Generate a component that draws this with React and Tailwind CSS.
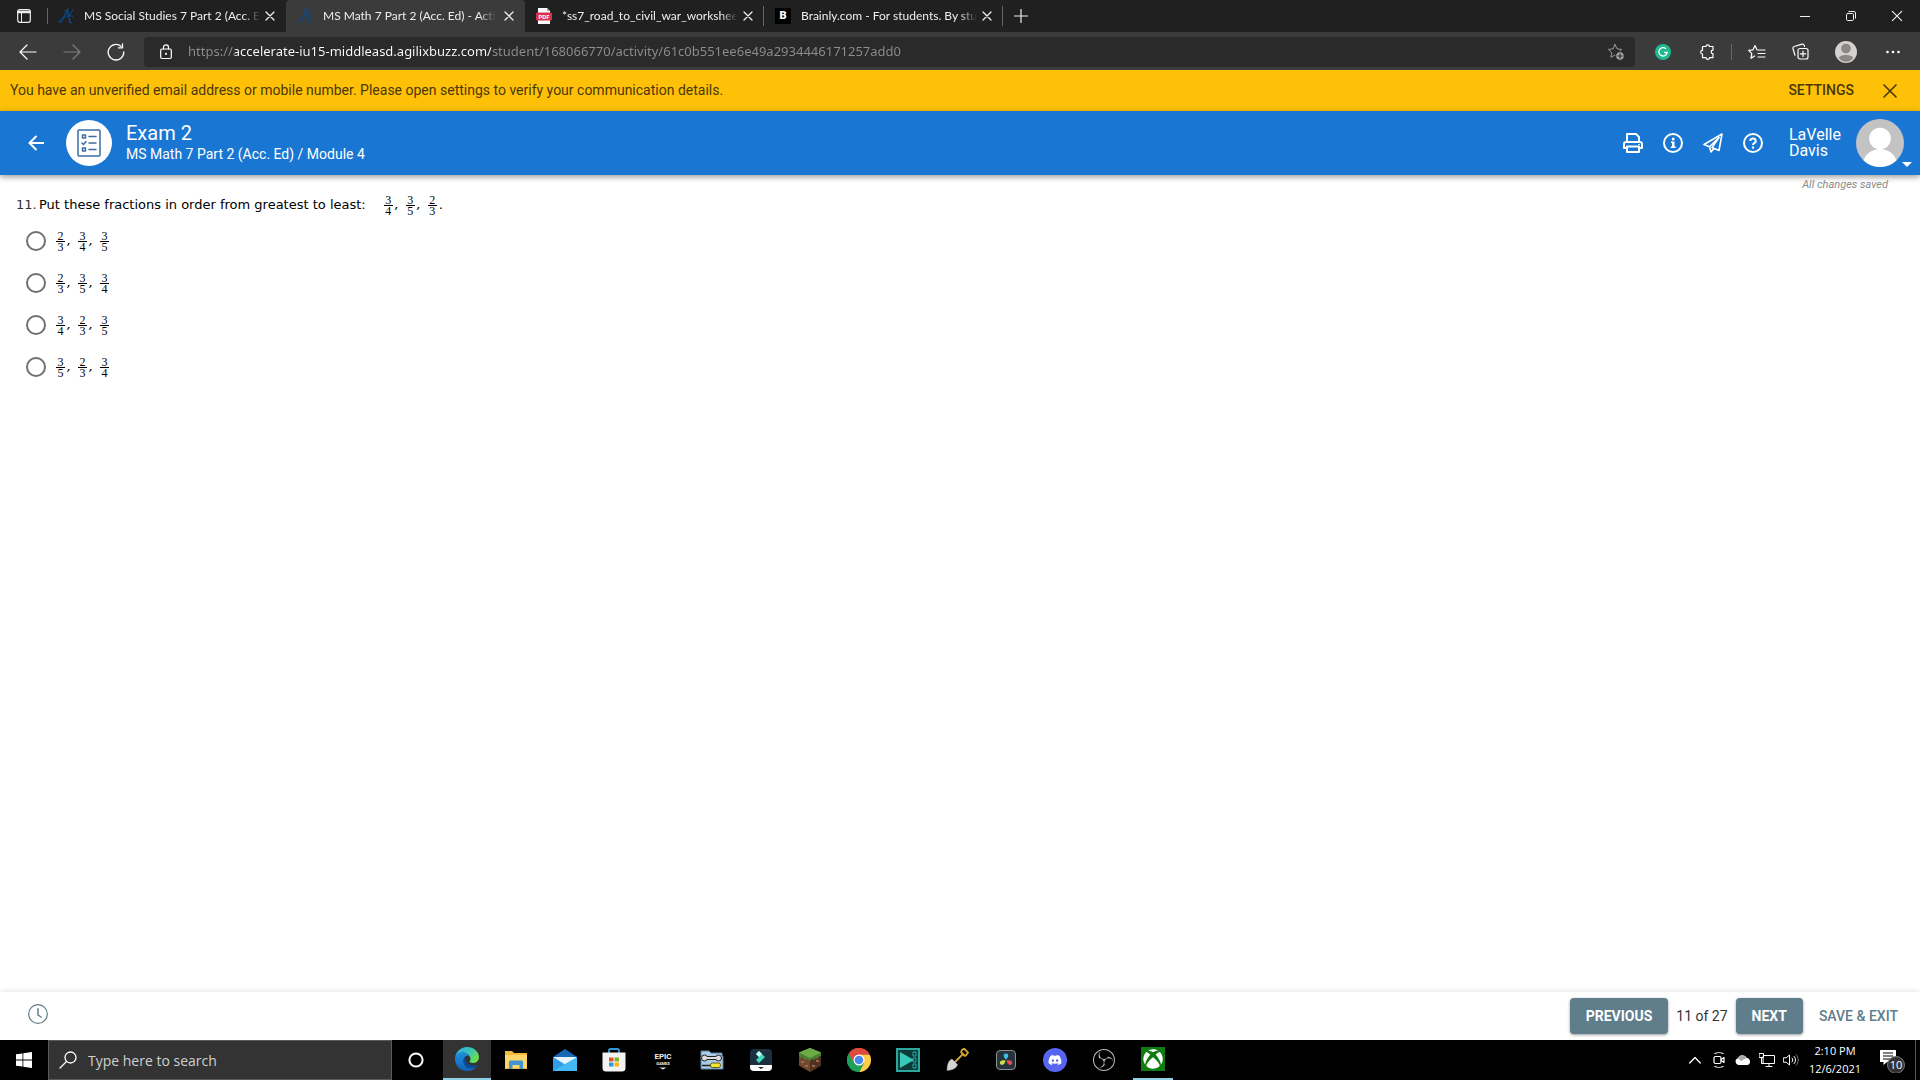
import React from "react";
import { FaDiscord, FaXbox } from "react-icons/fa";
import { SiObsstudio } from "react-icons/si";

const segoe = "font-['Open_Sans','Noto_Sans',sans-serif]";
const line = { fill: "none", stroke: "currentColor", strokeLinecap: "round", strokeLinejoin: "round" };

function CloseIcon({ className = "size-3", w = 1.3 }) {
  return (
    <svg viewBox="0 0 12 12" className={className} {...line} strokeWidth={w}>
      <path d="M2 2l8 8M10 2l-8 8" />
    </svg>
  );
}

function AFavicon({ className }) {
  return (
    <svg viewBox="0 0 16 16" className={className} fill="none" stroke="currentColor" strokeWidth="1.700">
      <path d="M.5 14C4 13 7.500 7 9.500 2L12 14.500h2" />
      <path d="M4 9.500c3.500.8 8-3 11.500-8M10 6l5 3" strokeWidth="1.200" />
      <path d="M2 14h3M6 3h3" strokeWidth="1" />
    </svg>
  );
}

function PdfFavicon() {
  return (
    <svg viewBox="0 0 16 16" className="size-4">
      <path d="M2 0h9l3 3v13H2z" fill="#fff" />
      <path d="M11 0l3 3h-3z" fill="#999" />
      <rect x="0" y="4.500" width="16" height="8" rx="1" fill="#d8324a" />
      <text x="8" y="10.900" textAnchor="middle" fontSize="6" fontWeight="700" fontFamily="Roboto" fill="#fff">PDF</text>
    </svg>
  );
}

function BrainlyFavicon() {
  return (
    <span className="flex size-4 items-center justify-center bg-black font-['Roboto',sans-serif] text-[11px] font-black text-white">B</span>
  );
}

const tabs = [
  { title: "MS Social Studies 7 Part 2 (Acc. E", icon: <AFavicon className="size-4 text-[#10457a]" /> },
  { title: "MS Math 7 Part 2 (Acc. Ed) - Acti", icon: <AFavicon className="size-4 text-[#1a4676]" />, active: true },
  { title: "*ss7_road_to_civil_war_workshee", icon: <PdfFavicon />, divider: true },
  { title: "Brainly.com - For students. By stu", icon: <BrainlyFavicon />, divider: true },
];

function TabBar() {
  return (
    <div className={`${segoe} flex h-8 items-stretch bg-[#202020] text-[#eee]`}>
      <button aria-label="Tab actions menu" className="flex w-12 items-center justify-center">
        <svg viewBox="0 0 14 14" className="size-3.5" {...line}>
          <rect x=".7" y=".7" width="12.600" height="12.600" rx="2" strokeWidth="1.200" />
          <path d="M1 3h12" strokeWidth="2.500" />
          <path d="M4.500 3v10" />
        </svg>
      </button>
      <span className="my-2 -mr-px -ml-px w-px bg-[#666]" />
      {tabs.map((t) => (
        <div key={t.title} className={t.active ? "flex w-[239px] items-center rounded-t bg-[#3b3b3b]" : "flex w-[239px] items-center"}>
          <button className="flex min-w-0 flex-1 items-center gap-2.5 pl-[11px]">
            <span className="shrink-0">{t.icon}</span>
            <span className="font-['Lato',sans-serif] text-[12px] whitespace-nowrap [mask-image:linear-gradient(90deg,#000_90%,transparent)]">{t.title}</span>
          </button>
          <button aria-label="Close tab" className="mx-2 flex size-4 items-center justify-center">
            <CloseIcon />
          </button>
          {t.divider && <span className="-ml-px h-5 w-px bg-[#666]" />}
        </div>
      ))}
      <button aria-label="New tab" className="flex w-9 items-center justify-center">
        <svg viewBox="0 0 14 14" className="size-3.5" {...line} strokeWidth="1.200"><path d="M7 0v14M0 7h14" /></svg>
      </button>
      <div className="ml-auto flex">
        <button aria-label="Minimize" className="flex w-[46px] items-center justify-center">
          <svg viewBox="0 0 10 10" className="size-2.5" {...line}><path d="M0 5.500h10" /></svg>
        </button>
        <button aria-label="Restore" className="flex w-[46px] items-center justify-center">
          <svg viewBox="0 0 10 10" className="size-2.5" {...line}>
            <rect x=".5" y="2.500" width="7" height="7" rx="1.200" /><path d="M2.800.5H8a1.500 1.500 0 0 1 1.500 1.500v5.200" />
          </svg>
        </button>
        <button aria-label="Close window" className="flex w-[46px] items-center justify-center">
          <CloseIcon className="size-3.5" w={1} />
        </button>
      </div>
    </div>
  );
}

const star = "M8 1.500l2 4.300 4.600.6-3.400 3.200.9 4.700L8 12l-4.100 2.300.9-4.700L1.400 6.400 6 5.800z";

function AddressBar() {
  return (
    <div className={`${segoe} flex h-[38px] items-center bg-[#3b3b3b] pt-px text-white`}>
      <button aria-label="Back" className="ml-1.5 flex w-11 items-center justify-center">
        <svg viewBox="0 0 18 18" className="size-[18px]" {...line} strokeWidth="1.200"><path d="M17 9H1M8 2L1 9l7 7" /></svg>
      </button>
      <button aria-label="Forward" className="flex w-11 items-center justify-center text-[#7c7c7c]">
        <svg viewBox="0 0 18 18" className="size-[18px]" {...line} strokeWidth="1.200"><path d="M1 9h16M10 2l7 7-7 7" /></svg>
      </button>
      <button aria-label="Refresh" className="flex w-11 items-center justify-center">
        <svg viewBox="0 0 18 18" className="size-[18px]" {...line} strokeWidth="1.300"><path d="M16.800 9A7.800 7.800 0 1 1 14 3.200M15.500.8v4h-4" /></svg>
      </button>
      <div className="ml-1.5 flex h-[30px] flex-1 items-center rounded bg-[#2a2a2a]">
        <button aria-label="View site information" className="ml-4 flex w-3 justify-center">
          <svg viewBox="0 0 12 16" className="h-4 w-3" {...line} strokeWidth="1.200">
            <rect x=".7" y="5" width="10.600" height="9.500" rx="1.200" /><path d="M3.500 5V3.300a2.500 2.500 0 0 1 5 0V5" /><circle cx="6" cy="9.800" r=".5" />
          </svg>
        </button>
        <input
          aria-label="Address"
          defaultValue="https://accelerate-iu15-middleasd.agilixbuzz.com/student/168066770/activity/61c0b551ee6e49a2934446171257add0"
          className="ml-4 min-w-0 flex-1 bg-[linear-gradient(90deg,#8d8d8d_47px,#fff_47px,#fff_303px,#8d8d8d_303px)] bg-clip-text font-['Noto_Sans',sans-serif] text-[13px] text-transparent outline-none"
        />
        <button aria-label="Add to favorites" className="mr-2.5 text-[#9a9a9a]">
          <svg viewBox="0 0 18 18" className="size-[18px]" {...line}>
            <path d={star} /><circle cx="13" cy="13" r="4.300" fill="#aaa" stroke="#2a2a2a" /><path d="M13 10.800v4.400M10.800 13h4.400" stroke="#2a2a2a" strokeWidth="1.200" />
          </svg>
        </button>
      </div>
      <button aria-label="Grammarly" className="ml-5 flex">
        <svg viewBox="0 0 16 16" className="size-4"><circle cx="8" cy="8" r="8" fill="#20b890" /><path d="M11 4.800A4.200 4.200 0 1 0 12.200 8.500H9" fill="none" stroke="#fff" strokeWidth="1.300" /></svg>
      </button>
      <button aria-label="Extensions" className="ml-7 flex">
        <svg viewBox="0 0 16 16" className="size-4" {...line} strokeWidth="1.200">
          <path d="M4 2.500h3a1.700 1.700 0 0 1 3.400 0H14v3.600a1.700 1.700 0 0 0 0 3.600v4h-3.500a1.700 1.700 0 0 1-3.400 0H3.500V10a1.700 1.700 0 1 1 0-3.600V3z" />
        </svg>
      </button>
      <span className="ml-4 h-4 w-px bg-[#666]" />
      <button aria-label="Favorites" className="ml-4 flex">
        <svg viewBox="0 0 18 16" className="h-4 w-[18px]" {...line} strokeWidth="1.200">
          <path d="M9 5.800L7 1.500l-2 4.300-4.300.6 3.100 3.200L3 14.300 6.500 12M10 6h7M10 9.500h7M10 13h7" />
        </svg>
      </button>
      <button aria-label="Collections" className="ml-[26px] flex">
        <svg viewBox="0 0 17 17" className="size-[17px]" {...line} strokeWidth="1.200">
          <rect x="6" y="5.500" width="10" height="10.500" rx="2" /><path d="M11 8v5.500M8.300 10.800h5.400M12.500 3.500l-.3-1A1.700 1.700 0 0 0 10 1.200L2.200 3.500A1.700 1.700 0 0 0 1 5.700l2 6.500" />
        </svg>
      </button>
      <button aria-label="Profile" className="ml-[26px] flex">
        <svg viewBox="0 0 22 22" className="size-[22px]"><circle cx="11" cy="11" r="11" fill="#d4d1ce" /><circle cx="11" cy="7.500" r="4.800" fill="#8b8885" /><path d="M4 17c0-4 14-4 14 0-3 5-11 5-14 0z" fill="#8b8885" /></svg>
      </button>
      <button aria-label="Settings and more" className="mr-[19px] ml-7 flex">
        <svg viewBox="0 0 16 4" className="h-1 w-4" fill="currentColor"><circle cx="2.500" cy="2" r="1.300" /><circle cx="8" cy="2" r="1.300" /><circle cx="13.500" cy="2" r="1.300" /></svg>
      </button>
    </div>
  );
}

function Notice() {
  return (
    <div className="flex h-[41px] items-center bg-[#ffc107] pl-2.5 text-[14px] text-[#4a3706]">
      <p>You have an unverified email address or mobile number. Please open settings to verify your communication details.</p>
      <button className="ml-auto font-medium">SETTINGS</button>
      <button aria-label="Dismiss" className="mr-[21px] ml-[27px] flex"><CloseIcon className="size-[18px]" w={1.1} /></button>
    </div>
  );
}

function Header() {
  return (
    <header className="z-10 flex h-16 items-center bg-[#1976d2] text-white shadow-[0_2px_6px_rgba(0,0,0,0.4)]">
      <button aria-label="Back" className="ml-7 flex">
        <svg viewBox="0 0 16 16" className="size-4" {...line} strokeLinecap="butt" strokeLinejoin="miter" strokeWidth="2"><path d="M16 8H1.500M8.500 1L1.500 8l7 7" /></svg>
      </button>
      <span className="ml-[22px] flex size-[46px] items-center justify-center rounded-full bg-white text-[#3d6ea3]">
        <svg viewBox="0 0 24 28" className="h-7 w-6" {...line} strokeWidth="1.500">
          <rect x="1" y="1" width="22" height="26" rx="1" />
          <rect x="5.500" y="6" width="3" height="3" /><path d="M12 7.500h7M12 14h7M12 20.500h7M5 14l1.500 1.500L9 12.500" /><rect x="5.500" y="19" width="3" height="3" />
        </svg>
      </span>
      <div className="ml-3.5 pb-0.5">
        <h1 className="text-[20px] leading-6">Exam 2</h1>
        <p className="text-[14px] leading-[18px]">MS Math 7 Part 2 (Acc. Ed) / Module 4</p>
      </div>
      <div className="ml-auto flex items-center gap-5">
        <button aria-label="Print">
          <svg viewBox="0 0 20 20" className="size-5" {...line} strokeWidth="2">
            <path d="M4 9V1h9l3 3v5M4 15H1v-4a2 2 0 0 1 2-2h14a2 2 0 0 1 2 2v4h-3M4 13.500h12V19H4z" /><circle cx="16" cy="11.500" r=".3" strokeWidth="1" />
          </svg>
        </button>
        <button aria-label="Information">
          <svg viewBox="0 0 20 20" className="size-5" fill="none" stroke="currentColor" strokeWidth="2">
            <circle cx="10" cy="10" r="9" />
            <path d="M8 8.500h3.500V13.500h1.200V15H7.800V13.500H9V10H8z" fill="currentColor" stroke="none" />
            <circle cx="10.200" cy="6" r="1.500" fill="currentColor" stroke="none" />
          </svg>
        </button>
        <button aria-label="Send message">
          <svg viewBox="0 0 20 20" className="size-5" {...line} strokeWidth="1.600">
            <path d="M19 1L1 11.500l5.500 2.300L16 4.500 9 14.500l7 3zM6.500 13.800L8 19l3-3.700" />
          </svg>
        </button>
        <button aria-label="Help">
          <svg viewBox="0 0 20 20" className="size-5" {...line} strokeWidth="2">
            <circle cx="10" cy="10" r="9" /><path d="M7.300 8a2.700 2.500 0 1 1 4 2.200c-1 .6-1.300.9-1.300 1.800" strokeLinecap="butt" /><circle cx="10" cy="14.500" r=".5" strokeWidth="1.500" />
          </svg>
        </button>
      </div>
      <button className="ml-[26px] flex items-center text-left">
        <span className="w-[67px] text-[16px] leading-4">LaVelle Davis</span>
        <svg viewBox="0 0 48 48" className="size-12">
          <defs><clipPath id="face"><circle cx="24" cy="24" r="24" /></clipPath></defs>
          <g clipPath="url(#face)"><path fill="#c3c3c3" d="M0 0h48v48H0z" /><circle cx="24" cy="19.500" r="10.800" fill="#fff" /><path d="M6 48c1-12 9-18 18-18s17 6 18 18z" fill="#fff" /></g>
        </svg>
        <svg viewBox="0 0 10 5" className="mr-2 -ml-0.5 h-[5px] w-2.5 self-end" fill="currentColor"><path d="M0 0h10L5 5z" /></svg>
      </button>
    </header>
  );
}

function Fraction({ n, d }) {
  return (
    <span className="inline-flex w-[9px] flex-col items-center font-['Liberation_Serif',serif] text-[12px] leading-[10px]">
      <span>{n}</span>
      <span className="h-px w-full bg-black" />
      <span>{d}</span>
    </span>
  );
}

function Fractions({ items, end = "" }) {
  return (
    <span className="flex items-center">
      {items.map(([n, d], i) => (
        <React.Fragment key={i}>
          <Fraction n={n} d={d} />
          {i < items.length - 1 ? <span className="w-[13px] pl-0.5 italic">,</span> : end && <span className="pl-0.5">{end}</span>}
        </React.Fragment>
      ))}
    </span>
  );
}

const choices = [
  [[2, 3], [3, 4], [3, 5]],
  [[2, 3], [3, 5], [3, 4]],
  [[3, 4], [2, 3], [3, 5]],
  [[3, 5], [2, 3], [3, 4]],
];

function Question() {
  return (
    <main className="flex flex-1 justify-between font-['DejaVu_Sans',sans-serif] text-[13px] text-black">
      <fieldset aria-labelledby="question" className="pt-[18px] pl-4">
        <div id="question" className="flex h-6 items-center">
          <span className="w-[23px] text-[#333]">11.</span>
          <span className="mr-[18px]">Put these fractions in order from greatest to least:</span>
          <Fractions items={[[3, 4], [3, 5], [2, 3]]} end="." />
        </div>
        <div className="mt-[3px] flex flex-col">
          {choices.map((c, i) => (
            <label key={i} className="flex h-[42px] items-center gap-2.5 pl-2.5">
              <input type="radio" name="answer" className="size-5 appearance-none rounded-full border-2 border-[#707070] checked:border-[6px]" />
              <Fractions items={c} />
            </label>
          ))}
        </div>
      </fieldset>
      <p className="mr-8 pt-0.5 font-['Roboto',sans-serif] text-[11px] text-[#8a8a8a] italic">All changes saved</p>
    </main>
  );
}

function ExamFooter() {
  const solid = "h-9 rounded bg-[#607d8b] px-4 font-bold text-white shadow-[0_1px_3px_rgba(0,0,0,0.4)]";
  return (
    <footer className="flex h-12 items-center bg-white text-[14px] shadow-[0_-2px_5px_rgba(0,0,0,0.08)]">
      <button aria-label="Time" className="mb-1 ml-7 text-[#607d8b]">
        <svg viewBox="0 0 20 20" className="size-5" {...line} strokeWidth="1.200"><circle cx="10" cy="10" r="9.300" /><path d="M10 4.800V11l3 2" strokeWidth="1.500" /></svg>
      </button>
      <div className="ml-auto flex items-center gap-2">
        <button className={solid}>PREVIOUS</button>
        <span className="text-[#333]">11 of 27</span>
        <button className={solid}>NEXT</button>
        <button className="mr-[22px] ml-2 font-medium text-[#607d8b]">SAVE &amp; EXIT</button>
      </div>
    </footer>
  );
}

function EdgeIcon() {
  return (
    <svg viewBox="0 0 24 24" className="size-6">
      <defs>
        <linearGradient id="eg" x1="0" y1="0" x2="1" y2=".5"><stop stopColor="#31a8e8" /><stop offset=".6" stopColor="#36c5b8" /><stop offset="1" stopColor="#6bdc4b" /></linearGradient>
        <linearGradient id="eb" x1="0" y1="0" x2="0" y2="1"><stop stopColor="#1b8fdc" /><stop offset="1" stopColor="#1462b8" /></linearGradient>
      </defs>
      <path d="M0 11.500C.5 5 5.500 0 12 0c7 0 12 5 12 10 0 4-3 6-6 6-2.500 0-4-1-3.300-2 .8-1 .8-2 .6-3C14.500 7.500 11 5.500 7.500 5.500 3.500 5.500.6 8.500 0 11.500z" fill="url(#eg)" />
      <path d="M0 12c0-4 3-6.500 7.500-6.500 3 0 5.500 1.300 6.800 3.300C12 7.800 8.500 10 8.500 14c0 4 3 7 7 7 2.500 0 4.800-.8 6.500-2-2 3-5.500 5-10 5C5.500 24 0 19 0 12z" fill="url(#eb)" />
      <path d="M8.500 14c0-1.800.8-3.300 2-4.300-.6 5.300 4.500 10.300 11 8.300.8-.3 1 .3.5 1-1.500 1.500-4 2.500-6.500 2.500-4 0-7-3.500-7-7.500z" fill="#0c4a93" />
    </svg>
  );
}

function FolderIcon() {
  return (
    <svg viewBox="0 0 22 18" className="h-[18px] w-[22px]">
      <path d="M0 0h7l2 2h13v16H0z" fill="#f0b93c" /><path d="M0 4h22v13H0z" fill="#fcd56c" /><path d="M4 18v-7a1.500 1.500 0 0 1 1.500-1.500h11A1.500 1.500 0 0 1 18 11v7h-3.500v-4h-7v4z" fill="#3f95d3" />
    </svg>
  );
}

function MailIcon() {
  return (
    <svg viewBox="0 0 24 22" className="h-[22px] w-6">
      <path d="M0 8l12-8 12 8v14H0z" fill="#1769b8" /><path d="M1 8h22v5L12 16 1 13z" fill="#e8f4fc" /><path d="M0 8l13 8-13 6z" fill="#2e9fe8" /><path d="M24 8L0 22h24z" fill="#45b9f5" />
    </svg>
  );
}

function StoreIcon() {
  return (
    <svg viewBox="0 0 24 24" className="size-6">
      <path d="M7 6V2.500A1.500 1.500 0 0 1 8.500 1h7A1.500 1.500 0 0 1 17 2.500V6" fill="none" stroke="#2f9ad8" strokeWidth="1.800" />
      <path d="M.5 4.500h23V20a3.500 3.500 0 0 1-3.500 3.500H4A3.500 3.500 0 0 1 .5 20z" fill="#f3f3f3" />
      <path d="M7 9.500h4.500v4H7z" fill="#e8522c" /><path d="M12.500 9.500H17v4h-4.500z" fill="#7db52b" /><path d="M7 14.500h4.500v4H7z" fill="#279be0" /><path d="M12.500 14.500H17v4h-4.500z" fill="#f5b51c" />
    </svg>
  );
}

function EpicIcon() {
  return (
    <svg viewBox="0 0 18 22" className="h-[22px] w-[18px]" fill="#eee">
      <text x="9" y="10" textAnchor="middle" fontSize="8" fontWeight="700" fontFamily="Roboto">EPIC</text>
      <text x="9" y="16" textAnchor="middle" fontSize="4" fontWeight="700" fontFamily="Roboto">GAMES</text>
      <path d="M5.500 18.500h7L9 20.500z" />
    </svg>
  );
}

function ToolsIcon() {
  return (
    <svg viewBox="0 0 24 20" className="h-5 w-6">
      <path d="M1 1h8l2 2h11v3h1v13H1z" fill="#a9cbe5" stroke="#5b7f9c" />
      <path d="M5 8h13" stroke="#222" strokeWidth="4" /><circle cx="4.500" cy="8" r="3" fill="#ddd" stroke="#222" /><circle cx="18.500" cy="8" r="3" fill="#ddd" stroke="#222" /><path d="M5 8h13" stroke="#ddd" strokeWidth="2" />
      <path d="M2 15.500h9" stroke="#222" strokeWidth="1.500" /><rect x="10.500" y="13" width="10" height="4.500" rx="2" fill="#f4e637" stroke="#5f5814" />
    </svg>
  );
}

function FilmoraIcon() {
  return (
    <svg viewBox="0 0 22 22" className="size-[22px]">
      <rect width="22" height="22" rx="4" fill="#1d3040" /><path d="M6 5l3-3 6 6-6 6-3-3 3-3z" fill="#42d9bd" /><path d="M6 5l3-3 3 3-3 3z" fill="#c9fff3" /><path d="M0 16h22v2a4 4 0 0 1-4 4H4a4 4 0 0 1-4-4z" fill="#fff" /><path d="M8 18h6l-3 2z" fill="#222" />
    </svg>
  );
}

function GrassBlockIcon() {
  return (
    <svg viewBox="0 0 24 24" className="size-6">
      <path d="M12 0l11 4.500v13L12 24 1 17.500v-13z" fill="#70492f" /><path d="M12 10l11-5.500v13L12 24z" fill="#4f3221" />
      <path d="M12 0l11 4.500V8l-3 1v2l-3-1v2l-3-1-2 2-3-2-2 1-2-3-2 1-2-2V4.500z" fill="#4c7f32" /><path d="M12 0l11 4.500L12 10 1 4.500z" fill="#6dac45" />
      <path d="M3 13h3v2H3zM7 17h3v2H7zM14 17h3v2h-3zM18 12h3v2h-3z" fill="#9a6b48" />
    </svg>
  );
}

function ChromeIcon() {
  return (
    <svg viewBox="0 0 24 24" className="size-6">
      <path d="M12 12L1.600 6a12 12 0 0 1 20.800 0z" fill="#dd4b3e" /><path d="M12 12L1.600 6A12 12 0 0 0 12 24l5.200-9z" fill="#1fa05a" /><path d="M12 6.500h10.700A12 12 0 0 1 12 24l5-9z" fill="#fcce45" />
      <path d="M1.600 6L7.200 15 12 12V6.500h10.600A12 12 0 0 0 1.600 6z" fill="#dd4b3e" /><path d="M1.600 6L7.200 15a5.500 5.500 0 0 0 9.600 0L12 24A12 12 0 0 1 1.600 6z" fill="#1fa05a" />
      <circle cx="12" cy="12" r="5.500" fill="#fff" /><circle cx="12" cy="12" r="4.300" fill="#4787ee" />
    </svg>
  );
}

function VideoEditorIcon() {
  return (
    <svg viewBox="0 0 24 24" className="size-6">
      <path fill="#2aa79c" d="M0 0h24v24H0z" /><path fill="#0b3a3a" d="M2 2h20v20H2z" /><path d="M17 4h3v4h-3zM17 10h3v4h-3zM17 16h3v4h-3z" fill="none" stroke="#2aa79c" /><path d="M4 4l14 8-14 8z" fill="#35c7b8" />
    </svg>
  );
}

function ShovelIcon() {
  return (
    <svg viewBox="0 0 24 24" className="size-6" fill="none">
      <path d="M9 15L18 6M15.500 3.500l5 5M16 3l3-2.500 4 4L20.500 8" stroke="#d4a62c" strokeWidth="1.800" />
      <path d="M7 11l5.500 5.500c-1 4-5 5.500-10.500 6C2 18 3 12.500 7 11z" fill="#d5d5d5" stroke="#999" strokeWidth=".5" />
    </svg>
  );
}

function ResolveIcon() {
  return (
    <svg viewBox="0 0 20 20" className="size-5">
      <rect x=".5" y=".5" width="19" height="19" rx="3.500" fill="#26323c" stroke="#8a8f94" />
      <path d="M10 9.500C7 7 7 3.500 10 3.500s3 3.500 0 6z" fill="#45bfe8" /><path d="M9.500 10.500c-.5 4-3.500 5.500-5.300 3.500-1.500-2.500 1.500-4.500 5.300-3.500z" fill="#c6e04c" /><path d="M10.500 10.500c.5 4 3.500 5.500 5.300 3.500 1.500-2.500-1.500-4.500-5.300-3.500z" fill="#ed4a5c" />
    </svg>
  );
}

const apps = [
  { name: "Microsoft Edge", icon: <EdgeIcon />, state: "active" },
  { name: "File Explorer", icon: <FolderIcon /> },
  { name: "Mail", icon: <MailIcon /> },
  { name: "Microsoft Store", icon: <StoreIcon /> },
  { name: "Epic Games", icon: <EpicIcon /> },
  { name: "Tools", icon: <ToolsIcon /> },
  { name: "Filmora", icon: <FilmoraIcon /> },
  { name: "Minecraft", icon: <GrassBlockIcon /> },
  { name: "Chrome", icon: <ChromeIcon /> },
  { name: "Video editor", icon: <VideoEditorIcon /> },
  { name: "Shovel", icon: <ShovelIcon /> },
  { name: "DaVinci Resolve", icon: <ResolveIcon /> },
  { name: "Discord", icon: <span className="flex size-6 items-center justify-center rounded-full bg-[#5865f2]"><FaDiscord className="size-3.5 text-white" /></span> },
  { name: "OBS Studio", icon: <SiObsstudio className="size-[22px] text-[#bdbdbd]" /> },
  { name: "Xbox", icon: <span className="flex size-6 items-center justify-center bg-[#107c10]"><FaXbox className="size-5 text-white" /></span>, state: "open" },
];

const appClass = {
  active: "flex w-12 items-center justify-center border-b-2 border-[#8fd0e6] bg-[#333]",
  open: "mx-1 flex w-10 items-center justify-center border-b-2 border-[#8fd0e6]",
};

function Taskbar() {
  return (
    <div className={`${segoe} flex h-10 items-stretch bg-black text-white`}>
      <button aria-label="Start" className="flex w-12 items-center justify-center">
        <svg viewBox="0 0 16 16" className="size-4" fill="currentColor"><path d="M0 2.300l6.500-.9v6.200H0zM7.300 1.300L16 0v7.600H7.300zM0 8.400h6.500v6.200L0 13.700zM7.300 8.400H16V16l-8.700-1.300z" /></svg>
      </button>
      <label className="flex w-[344px] items-center gap-[11px] border border-[#5a5a5a] bg-[#333] pl-2.5">
        <svg viewBox="0 0 18 18" className="size-[18px]" {...line} strokeWidth="1.300"><circle cx="11.500" cy="6.500" r="5.500" /><path d="M7.500 10.500L1 17" /></svg>
        <input aria-label="Search" placeholder="Type here to search" className="min-w-0 flex-1 bg-transparent text-[14px] outline-none placeholder:text-[#d0d0d0]" />
      </label>
      <button aria-label="Cortana" className="mr-[3px] flex w-12 items-center justify-center">
        <svg viewBox="0 0 16 16" className="size-4"><circle cx="8" cy="8" r="6.600" fill="none" stroke="#fff" strokeWidth="2" /></svg>
      </button>
      <div className="flex items-stretch gap-px">
        {apps.map((a) => (
          <button key={a.name} aria-label={a.name} className={appClass[a.state] || "flex w-12 items-center justify-center"}>{a.icon}</button>
        ))}
      </div>
      <div className="ml-auto flex items-center">
        <button aria-label="Show hidden icons" className="flex w-6 justify-center">
          <svg viewBox="0 0 12 8" className="h-2 w-3" {...line} strokeWidth="1.300"><path d="M.7 7L6 1.500 11.300 7" /></svg>
        </button>
        <button aria-label="Meet now" className="flex w-6 justify-center">
          <svg viewBox="0 0 16 16" className="size-4" {...line} strokeWidth="1.200"><rect x="3" y="4.500" width="7" height="7" rx="1.500" /><path d="M10 7.500l3-2v5l-3-2M4 1.500c2-1 6-1 8 0M4 14.500c2 1 6 1 8 0" /></svg>
        </button>
        <button aria-label="OneDrive" className="flex w-6 justify-center">
          <svg viewBox="0 0 16 10" className="h-2.5 w-4"><path d="M3.500 10A3.500 3.500 0 0 1 3 3.200 4.800 4.800 0 0 1 11.800 3 3.600 3.600 0 0 1 12.500 10z" fill="#fff" /><path d="M3 3.200A4.800 4.800 0 0 1 11.800 3L6 6z" fill="#aaa" /></svg>
        </button>
        <button aria-label="Network" className="flex w-6 justify-center">
          <svg viewBox="0 0 16 14" className="h-3.5 w-4" {...line}><path d="M4.500 2.500h11v8h-11zM10 10.500v3M7 13.500h6M.5.500h4v4h-4zM2.500 4.500v6h2" /></svg>
        </button>
        <button aria-label="Volume" className="flex w-6 justify-center">
          <svg viewBox="0 0 16 14" className="h-3.5 w-4" {...line}><path d="M.7 4.800h2.500L6.500 2v10L3.200 9.200H.7zM9 5c1 1 1 3 0 4M11 3.300c2 2 2 5.400 0 7.400" /><path d="M13 1.500c3 3 3 8 0 11" stroke="#777" /></svg>
        </button>
        <button className="flex w-16 flex-col items-center text-[11px] leading-[18px] whitespace-nowrap">
          <span>2:10 PM</span>
          <span>12/6/2021</span>
        </button>
        <button aria-label="Notifications, 10" className="ml-3 flex">
          <svg viewBox="0 0 26 26" className="size-[26px]">
            <path d="M1 3h16v12H8l-3.500 3v-3H1z" fill="#fff" /><path d="M4 6h10M4 9h10M4 12h7" stroke="#000" />
            <circle cx="17" cy="18" r="8.500" fill="#333" stroke="#777" />
            <text x="17" y="22" textAnchor="middle" fontSize="11" fontFamily="Open Sans" fill="#fff">10</text>
          </svg>
        </button>
        <span className="mr-1 ml-2.5 h-10 w-px bg-[#555]" />
      </div>
    </div>
  );
}

export default function App() {
  return (
    <div className="flex min-h-screen flex-col bg-white font-['Roboto',sans-serif]">
      <TabBar />
      <AddressBar />
      <Notice />
      <Header />
      <Question />
      <ExamFooter />
      <Taskbar />
    </div>
  );
}
